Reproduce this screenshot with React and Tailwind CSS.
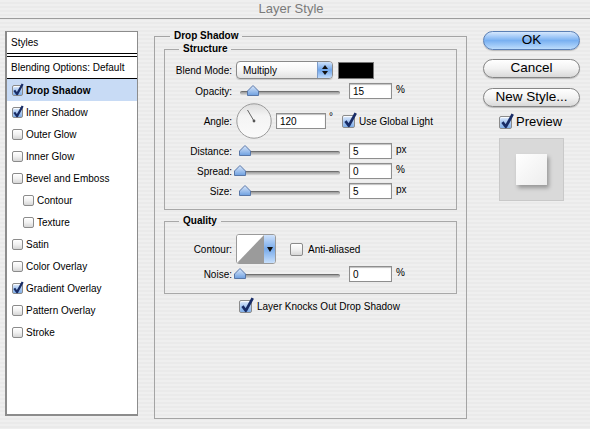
import React from 'react'

function Box({ on, big }) {
  return (
    <span
      className={`relative inline-block shrink-0 rounded-[2px] border border-[#8b8b8b] shadow-[inset_0_1px_1px_rgba(255,255,255,0.9)] ${
        big ? 'h-[13px] w-[13px]' : 'h-[11px] w-[11px]'
      } ${
        on
          ? 'bg-linear-to-b from-[#dce9fb] via-[#a9c8f1] to-[#7faee9]'
          : 'bg-linear-to-b from-white via-[#f1f1f1] to-[#d6d6d6]'
      }`}
    >
      {on && (
        <svg
          className={big ? 'absolute -top-[4px] left-[0px]' : 'absolute -top-[3px] -left-[1px]'}
          width={big ? 14 : 12}
          height={big ? 16 : 13}
          viewBox="0 0 12 14"
        >
          <path d="M2 8 L5 12 L11 1" fill="none" stroke="#182c66" strokeWidth="2.4" strokeLinejoin="round" />
        </svg>
      )}
    </span>
  )
}

function Slider({ pos }) {
  return (
    <div className="relative ml-[4px] h-[16px] w-[100px] shrink-0">
      <div className="absolute left-0 right-0 top-[8px] h-[4px] rounded-full border-t border-[#6f6f6f] bg-linear-to-b from-[#9a9a9a] to-[#d9d9d9]" />
      <svg className="absolute top-[2px]" style={{ left: pos - 6 }} width="12" height="11" viewBox="0 0 12 11">
        <defs>
          <linearGradient id="thumb" x1="0" y1="0" x2="0" y2="1">
            <stop offset="0" stopColor="#dce9fb" />
            <stop offset="1" stopColor="#6d9fe0" />
          </linearGradient>
        </defs>
        <path d="M0.5 10.5 V6 L6 0.5 L11.5 6 V10.5 Z" fill="url(#thumb)" stroke="#5877a8" />
      </svg>
    </div>
  )
}

function Field({ value, wide }) {
  return (
    <div
      className={`flex h-[16px] shrink-0 items-center border border-[#8e8e8e] bg-white pl-[3px] shadow-[inset_0_1px_1px_rgba(0,0,0,0.25)] ${
        wide ? 'ml-[4px] w-[50px]' : 'ml-[9px] w-[43px]'
      }`}
    >
      {value}
    </div>
  )
}

function Label({ children }) {
  return <span className="w-[71px] shrink-0 pr-[4px] text-right">{children}</span>
}

function SliderRow({ label, pos, value, unit, className = 'mt-[4px]' }) {
  return (
    <div className={`flex h-[16px] items-center ${className}`}>
      <Label>{label}</Label>
      <Slider pos={pos} />
      <Field value={value} />
      <span className="relative -top-[2px] ml-[4px]">{unit}</span>
    </div>
  )
}

function Dial() {
  return (
    <svg width="36" height="36" viewBox="0 0 36 36" className="shrink-0">
      <defs>
        <linearGradient id="dial" x1="0" y1="0" x2="0" y2="1">
          <stop offset="0" stopColor="#dcdcdc" />
          <stop offset="0.35" stopColor="#f4f4f4" />
          <stop offset="1" stopColor="#fafafa" />
        </linearGradient>
      </defs>
      <circle cx="18" cy="18" r="17.2" fill="url(#dial)" stroke="#9a9a9a" />
      <line x1="18" y1="18" x2="11.5" y2="7" stroke="#555" strokeWidth="0.9" />
      <circle cx="18" cy="18" r="1.4" fill="#555" />
    </svg>
  )
}

function BlendSelect() {
  return (
    <div className="flex h-[18px] w-[97px] shrink-0 overflow-hidden rounded-[4px] border border-[#8a8a8a] bg-linear-to-b from-white via-[#f6f6f6] to-[#e2e2e2] shadow-[0_1px_1px_rgba(0,0,0,0.15)]">
      <span className="flex flex-1 items-center pl-[6px]">Multiply</span>
      <span className="flex w-[15px] flex-col items-center justify-center gap-[2px] border-l border-[#7d9cc9] bg-linear-to-b from-[#cfe2fb] via-[#6ea5ea] to-[#c2dcfb]">
        <svg width="6" height="4" viewBox="0 0 6 4">
          <path d="M0 4 L3 0 L6 4 Z" fill="#111" />
        </svg>
        <svg width="6" height="4" viewBox="0 0 6 4">
          <path d="M0 0 L3 4 L6 0 Z" fill="#111" />
        </svg>
      </span>
    </div>
  )
}

function ContourPicker() {
  return (
    <div className="flex h-[30px] w-[40px] shrink-0 overflow-hidden rounded-[3px] border border-[#9a9a9a] bg-white">
      <svg width="27" height="28" viewBox="0 0 27 28" className="shrink-0">
        <rect x="0" y="0" width="27" height="28" fill="#fff" />
        <path d="M0 28 L27 0 L27 28 Z" fill="#9b9b9b" />
      </svg>
      <span className="flex flex-1 items-center justify-center bg-linear-to-b from-[#cfe2fb] via-[#77aaea] to-[#c7dffb]">
        <svg width="6" height="5" viewBox="0 0 6 5">
          <path d="M0 0 L3 5 L6 0 Z" fill="#111" />
        </svg>
      </span>
    </div>
  )
}

const styles = [
  { name: 'Drop Shadow', on: true, active: true },
  { name: 'Inner Shadow', on: true },
  { name: 'Outer Glow' },
  { name: 'Inner Glow' },
  { name: 'Bevel and Emboss' },
  { name: 'Contour', sub: true },
  { name: 'Texture', sub: true },
  { name: 'Satin' },
  { name: 'Color Overlay' },
  { name: 'Gradient Overlay', on: true },
  { name: 'Pattern Overlay' },
  { name: 'Stroke' },
]

function StylesList() {
  return (
    <div className="ml-[5px] mt-[12px] h-[385px] w-[133px] shrink-0 border-t border-r border-b-2 border-l-2 border-[#8c8c8c] bg-white">
      <div className="flex h-[25px] items-center border-b-4 border-double border-black pl-[4px]">Styles</div>
      <div className="flex h-[22px] items-center border-b border-black pl-[4px]">Blending Options: Default</div>
      {styles.map((s) => (
        <div
          key={s.name}
          className={`flex h-[22px] items-center gap-[3px] ${s.sub ? 'pl-[16px]' : 'pl-[5px]'} ${
            s.active ? 'bg-[#c8dbf5] font-bold' : ''
          }`}
        >
          <Box on={s.on} />
          <span>{s.name}</span>
        </div>
      ))}
    </div>
  )
}

function DropShadowPanel() {
  return (
    <fieldset className="ml-[16px] mt-[11px] h-[389px] w-[313px] shrink-0 border border-[#a4a4a4]">
      <legend className="ml-[15px] px-[4px] font-bold leading-[12px]">Drop Shadow</legend>

      <fieldset className="ml-[9px] mt-[1px] w-[293px] border border-[#a8a8a8] pb-[10px]">
        <legend className="ml-[14px] px-[4px] font-bold leading-[12px]">Structure</legend>
        <div className="mt-[6px] flex h-[18px] items-center">
          <Label>Blend Mode:</Label>
          <BlendSelect />
          <span className="ml-[5px] h-[17px] w-[36px] border border-[#777] bg-black" />
        </div>
        <SliderRow label="Opacity:" pos={13} value="15" unit="%" />
        <div className="mt-[4px] flex h-[36px] items-center">
          <Label>Angle:</Label>
          <Dial />
          <Field value="120" wide />
          <span className="relative -top-[5px] ml-[3px]">°</span>
          <span className="ml-[9px] flex items-center gap-[4px]">
            <Box on big />
            <span>Use Global Light</span>
          </span>
        </div>
        <SliderRow label="Distance:" pos={5} value="5" unit="px" />
        <SliderRow label="Spread:" pos={0} value="0" unit="%" />
        <SliderRow label="Size:" pos={5} value="5" unit="px" />
      </fieldset>

      <fieldset className="ml-[9px] mt-[5px] w-[293px] border border-[#a8a8a8] pb-[11px]">
        <legend className="ml-[14px] px-[4px] font-bold leading-[12px]">Quality</legend>
        <div className="mt-[7px] flex h-[30px] items-center">
          <Label>Contour:</Label>
          <ContourPicker />
          <span className="ml-[14px] flex items-center gap-[5px]">
            <Box big />
            <span>Anti-aliased</span>
          </span>
        </div>
        <SliderRow label="Noise:" pos={0} value="0" unit="%" className="mt-[2px]" />
      </fieldset>

      <div className="ml-[84px] mt-[5px] flex h-[14px] items-center gap-[5px]">
        <Box on big />
        <span>Layer Knocks Out Drop Shadow</span>
      </div>
    </fieldset>
  )
}

function Button({ children, primary, className = '' }) {
  return (
    <div
      className={`flex h-[19px] items-center justify-center rounded-full border text-[13.5px] shadow-[0_1px_1px_rgba(0,0,0,0.2)] ${
        primary
          ? 'border-[#5a7fb5] bg-linear-to-b from-[#d6e8fd] via-[#79b0f1] to-[#bcdcfc]'
          : 'border-[#858585] bg-linear-to-b from-white via-[#f2f2f2] to-[#d9d9d9]'
      } ${className}`}
    >
      {children}
    </div>
  )
}

function Actions() {
  return (
    <div className="ml-[16px] mt-[12px] w-[97px] shrink-0">
      <Button primary>OK</Button>
      <Button className="mt-[9px]">Cancel</Button>
      <Button className="mt-[10px]">New Style...</Button>
      <div className="ml-[16px] mt-[8px] flex h-[14px] items-center gap-[4px] text-[13px]">
        <Box on big />
        <span>Preview</span>
      </div>
      <div className="ml-[16px] mt-[9px] flex h-[63px] w-[65px] items-center justify-center border border-[#c9c9c9] bg-[#d9d9d9]">
        <div className="h-[31px] w-[31px] bg-linear-to-br from-white to-[#ededed] shadow-[2px_3px_4px_rgba(0,0,0,0.3)]" />
      </div>
    </div>
  )
}

export default function App() {
  return (
    <div className="h-[429px] w-[590px] overflow-hidden bg-[repeating-linear-gradient(180deg,#efefef_0px,#efefef_2px,#eaeaea_2px,#eaeaea_4px)] font-['Liberation_Sans',Arial,sans-serif] text-[10px] text-black">
      <div className="flex h-[19px] items-center justify-center border-b border-[#9c9c9c] pr-[8px] text-[13px] text-[#7a7a7a]">
        Layer Style
      </div>
      <div className="flex items-start">
        <StylesList />
        <DropShadowPanel />
        <Actions />
      </div>
    </div>
  )
}
